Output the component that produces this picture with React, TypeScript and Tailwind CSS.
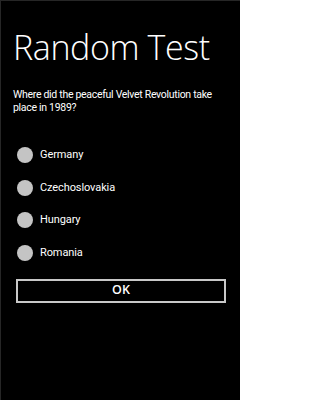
import React from "react";

const options = ["Germany", "Czechoslovakia", "Hungary", "Romania"];

export default function App() {
  return (
    <div
      className="w-[240px] h-[400px] bg-black text-white border-t border-l border-[#262626] overflow-hidden"
      style={{ fontFamily: '"Open Sans", "Noto Sans", sans-serif' }}
    >
      <div className="pl-[12px] pr-[4px]">
        <h1 className="mt-[26px] text-[34px] leading-[40px] font-light tracking-[-0.4px] text-white">
          Random Test
        </h1>
        <p
          className="mt-[22px] text-[10.5px] leading-[12.5px] text-white tracking-[-0.3px] whitespace-nowrap"
          style={{ fontFamily: 'Roboto, "Open Sans", sans-serif' }}
        >
          Where did the peaceful Velvet Revolution take
          <br />
          place in 1989?
        </p>
        <div className="mt-[33px] flex flex-col gap-[16.5px] pl-[4px]">
          {options.map((o) => (
            <div key={o} className="flex items-center gap-[7px] h-[16px]">
              <span className="w-[16px] h-[16px] rounded-full bg-[#c4c4c4] shrink-0" />
              <span
                className="text-[11px] leading-[16px] text-white tracking-[-0.1px]"
                style={{ fontFamily: 'Roboto, "Open Sans", sans-serif' }}
              >
                {o}
              </span>
            </div>
          ))}
        </div>
        <button className="mt-[18px] ml-[3px] w-[210px] h-[24px] border-2 border-[#c8c8c8] bg-black flex items-center justify-center text-[12.5px] font-semibold text-white leading-none">
          OK
        </button>
      </div>
    </div>
  );
}
